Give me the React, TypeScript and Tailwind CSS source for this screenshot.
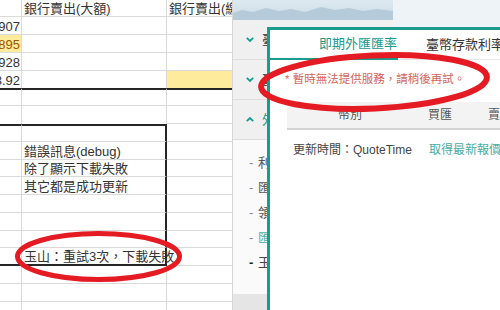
import React from 'react';

type Line = 'light' | 'dark' | 'none';

interface SheetRow {
  h: string;
  text: [string, string, string];
  bottom?: [Line, Line, Line];
  top?: [Line, Line, Line];
  boxRight?: boolean;
  yellowA?: boolean;
  yellowC?: boolean;
}

const bottomCls: Record<Line, string> = {
  light: 'border-b border-b-[#dadada]',
  dark: 'border-b-2 border-b-[#262626]',
  none: '',
};

const topCls: Record<Line, string> = {
  light: 'border-t border-t-[#dadada]',
  dark: 'border-t-2 border-t-[#262626]',
  none: '',
};

const L: [Line, Line, Line] = ['light', 'light', 'light'];

const rows: SheetRow[] = [
  { h: 'h-[17px]', text: ['', '銀行賣出(大額)', '銀行賣出(繳款)'] },
  { h: 'h-[18px]', text: ['30.907', '', ''] },
  { h: 'h-[18px]', text: ['30.895', '', ''], yellowA: true },
  { h: 'h-[18px]', text: ['30.928', '', ''] },
  { h: 'h-[17px]', text: ['33.92', '', ''], yellowC: true, bottom: ['none', 'none', 'none'] },
  { h: 'h-[18px]', text: ['', '', ''], top: ['dark', 'dark', 'dark'] },
  { h: 'h-[18px]', text: ['', '', ''], bottom: ['none', 'none', 'light'] },
  { h: 'h-[18px]', text: ['', '', ''], top: ['dark', 'dark', 'none'], boxRight: true },
  { h: 'h-[18px]', text: ['', '錯誤訊息(debug)', ''], boxRight: true },
  { h: 'h-[17px]', text: ['', '除了顯示下載失敗', ''], boxRight: true },
  { h: 'h-[18px]', text: ['', '其它都是成功更新', ''], boxRight: true },
  { h: 'h-[18px]', text: ['', '', ''], boxRight: true },
  { h: 'h-[18px]', text: ['', '', ''], boxRight: true },
  { h: 'h-[17px]', text: ['', '', ''], boxRight: true },
  { h: 'h-[18px]', text: ['', '玉山：重試3次，下載失敗', ''], boxRight: true, bottom: ['dark', 'dark', 'light'] },
  { h: 'h-[18px]', text: ['', '', ''] },
  { h: 'h-[18px]', text: ['', '', ''] },
  { h: 'h-[18px]', text: ['', '', ''] },
];

const Sheet = () => (
  <div className="w-[232px] shrink-0 flex flex-col overflow-hidden bg-white text-[13px] leading-[15px] text-[#333]">
    {rows.map((row, i) => {
      const bottom = row.bottom ?? L;
      const top = row.top ?? ['none', 'none', 'none'];
      return (
        <div key={i} className={`flex shrink-0 ${row.h}`}>
          <div
            className={`w-[22px] shrink-0 flex items-end justify-end pr-px border-r border-r-[#dadada] ${bottomCls[bottom[0]]} ${topCls[top[0]]} ${
              row.yellowA ? 'bg-[#ffeb9c] text-[#9c5700]' : ''
            }`}
          >
            <span className="whitespace-nowrap">{row.text[0]}</span>
          </div>
          <div
            className={`w-[145px] shrink-0 flex items-end pl-[2px] ${
              row.boxRight ? 'border-r-2 border-r-[#262626]' : 'border-r border-r-[#dadada]'
            } ${bottomCls[bottom[1]]} ${topCls[top[1]]}`}
          >
            <span className="whitespace-nowrap">{row.text[1]}</span>
          </div>
          <div
            className={`w-[65px] shrink-0 flex items-end pl-[2px] ${bottomCls[bottom[2]]} ${topCls[top[2]]} ${
              row.yellowC ? 'bg-[#ffeb9c]' : ''
            }`}
          >
            <span className="whitespace-nowrap">{row.text[2]}</span>
          </div>
        </div>
      );
    })}
  </div>
);

const Chevron = ({ up }: { up?: boolean }) => (
  <svg width="8" height="5" viewBox="0 0 8 5" className="shrink-0">
    <polyline
      points={up ? '0.8,4.2 4,1 7.2,4.2' : '0.8,0.8 4,4 7.2,0.8'}
      fill="none"
      stroke="#1a9b8e"
      strokeWidth="1.8"
    />
  </svg>
);

const menuHeads = [
  { label: '臺幣存款利率', open: false },
  { label: '臺幣放款利率', open: false },
  { label: '外匯匯率', open: true },
];

const menuItems = [
  { label: '利率比較', cls: 'text-[#555]', dash: 'text-[#888]' },
  { label: '匯率比較', cls: 'text-[#555]', dash: 'text-[#888]' },
  { label: '領券活動', cls: 'text-[#555]', dash: 'text-[#888]' },
  { label: '匯率查詢', cls: 'text-[#4fb3a8]', dash: 'text-[#888]' },
  { label: '玉山銀行', cls: 'text-[#444]', dash: 'text-[#222] font-bold' },
];

const SidePanel = () => (
  <div className="w-[160px] shrink-0 flex flex-col">
    <svg width="160" height="20" viewBox="0 0 160 20" className="block shrink-0">
      <defs>
        <linearGradient id="sky" x1="0" y1="0" x2="0" y2="1">
          <stop offset="0" stopColor="#dde9f0" />
          <stop offset="1" stopColor="#c9dbe6" />
        </linearGradient>
      </defs>
      <rect width="160" height="20" fill="url(#sky)" />
      <path
        d="M0 13 L9 10 L20 12 L33 8 L46 11 L58 9 L72 12 L88 7 L102 10 L116 8 L130 11 L144 9 L160 11 V20 H0Z"
        fill="#b6cbd9"
      />
    </svg>
    <div className="flex flex-col bg-[#fafafa] text-[13px] leading-[16px]">
      {menuHeads.map((m) => (
        <div
          key={m.label}
          className="h-[40px] flex items-center gap-[8px] pl-[13px] bg-[#f0f0f0] border-b border-[#dedede]"
        >
          <Chevron up={m.open} />
          <span className={`whitespace-nowrap ${m.open ? 'text-[#1a9b8e]' : 'text-[#333]'}`}>{m.label}</span>
        </div>
      ))}
      <div className="flex flex-col pt-[10px] pb-[19px]">
        {menuItems.map((m) => (
          <div key={m.label} className="h-[25px] flex items-center pl-[16px]">
            <span className={`w-[9px] ${m.dash}`}>-</span>
            <span className={`whitespace-nowrap ${m.cls}`}>{m.label}</span>
          </div>
        ))}
      </div>
    </div>
    <div className="flex-1 bg-[#e5e5e5]" />
  </div>
);

const RateModal = () => (
  <div className="absolute left-[267px] top-[27px] right-0 bottom-0 bg-white border-l-[3px] border-t-[3px] border-[#1a9b8e] flex flex-col">
    <div className="h-[30px] shrink-0 flex border-b border-[#e8e8e8]">
      <div className="w-[128px] shrink-0 flex items-center pl-[49px] border-b-2 border-[#1a9b8e] -mb-px text-[13px] text-[#1a9b8e] whitespace-nowrap">
        即期外匯匯率
      </div>
      <div className="ml-[28px] flex items-center text-[13px] text-[#333] whitespace-nowrap">臺幣存款利率</div>
    </div>
    <div className="mt-[11px] ml-[15px] text-[11.5px] leading-[16px] text-[#d4645a] whitespace-nowrap">
      * 暫時無法提供服務，請稍後再試。
    </div>
    <div className="mt-[15px] ml-[17px] flex flex-col">
      <div className="h-[28px] flex items-center bg-[#f3f3f3] border-b-2 border-[#d3d3d3] text-[12px] text-[#555] whitespace-nowrap">
        <div className="w-[126px] shrink-0 text-center">幣別</div>
        <div className="w-[54px] shrink-0 text-center">買匯</div>
        <div className="w-[66px] shrink-0 text-center">賣匯</div>
      </div>
      <div className="mt-[12px] pl-[6px] flex items-center gap-[17px] text-[12px] leading-[16px] whitespace-nowrap">
        <span className="text-[#444]">更新時間：QuoteTime</span>
        <span className="text-[#4aab9f]">取得最新報價</span>
      </div>
    </div>
  </div>
);

export default function App() {
  return (
    <div className="relative w-[500px] h-[310px] overflow-hidden bg-white flex font-['Liberation_Sans','Noto_Sans_CJK_TC',sans-serif]">
      <Sheet />
      <div className="flex-1 flex border-l border-[#d6d6d6]">
        <SidePanel />
        <div className="flex-1 bg-[#edf3f6]" />
      </div>
      <RateModal />
      {/* red hand-drawn circles */}
      <svg className="absolute inset-0 pointer-events-none" width="500" height="310" viewBox="0 0 500 310">
        <ellipse
          cx="374"
          cy="82"
          rx="113"
          ry="26.5"
          transform="rotate(-2.5 374 82)"
          fill="none"
          stroke="#e41b23"
          strokeWidth="6"
        />
        <ellipse cx="98.5" cy="256.5" rx="81" ry="23" fill="none" stroke="#e41b23" strokeWidth="5" />
      </svg>
    </div>
  );
}
